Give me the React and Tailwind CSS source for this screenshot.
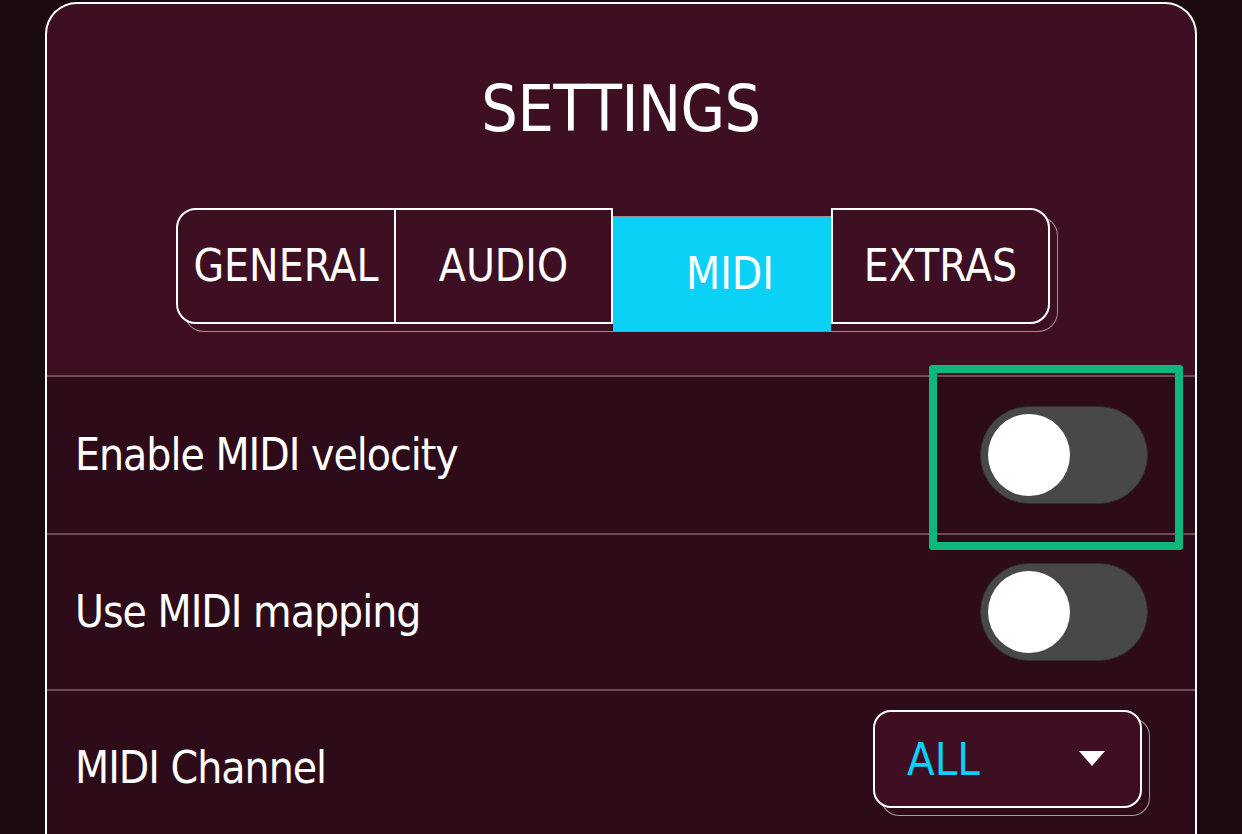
import React, { useState } from 'react';

const FONT = { fontFamily: '"DejaVu Sans Condensed", "Liberation Sans Narrow", "Liberation Sans", sans-serif' };

const TABS = ['GENERAL', 'AUDIO', 'MIDI', 'EXTRAS'];

function Toggle({ on, onChange }) {
  return (
    <button
      onClick={() => onChange(!on)}
      className="w-[168px] h-[98px] rounded-full bg-[#484848] border border-[#2f2f2f] flex items-center px-[7px]"
    >
      <span className={`block w-[82px] h-[82px] rounded-full bg-white ${on ? 'ml-auto' : ''}`} />
    </button>
  );
}

function Row({ label, children, first }) {
  return (
    <div className={`h-[156px] flex items-center justify-between pl-[28px] pr-[47px] bg-[#2e0b19] ${first ? '' : 'border-t-2 border-[#6d4b5b]'}`}>
      <span className="text-[44px] tracking-[-1px] text-white leading-none">{label}</span>
      {children}
    </div>
  );
}

export default function App() {
  const [tab, setTab] = useState('MIDI');
  const [velocity, setVelocity] = useState(false);
  const [mapping, setMapping] = useState(false);

  return (
    <div className="relative h-[834px] w-[1242px] overflow-hidden bg-[#1b0910]" style={FONT}>
      <div className="mt-[2px] mx-[45px] rounded-t-[32px] border-2 border-b-0 border-white bg-[#3e0f22] overflow-hidden">
        <div className="pt-[65px] pb-[51px] border-b-2 border-[#6d4b5b]">
          <h1 className="text-center text-white text-[64px] tracking-[-0.5px] leading-[80px]">SETTINGS</h1>
          <div className="flex justify-center pr-[16px] mt-[59px]">
            <div className="flex rounded-[20px] shadow-[8px_8px_0_-1px_#3e0f22,8px_8px_0_0_#9d8c94]">
              {TABS.map((t, i) => {
                const active = t === tab;
                const widths = ['w-[220px]', 'w-[217px]', 'w-[218px]', 'w-[219px]'];
                let cls;
                if (active) {
                  cls = 'bg-[#0bd1f7] translate-y-[8px] border-y border-[#9d8c94] pl-[16px]';
                } else if (i === 0) {
                  cls = 'bg-[#3e0f22] border-2 border-white rounded-l-[20px]';
                } else if (i === TABS.length - 1) {
                  cls = 'bg-[#3e0f22] border-2 border-white rounded-r-[20px]';
                } else {
                  cls = 'bg-[#3e0f22] border-y-2 border-r-2 border-white';
                }
                return (
                  <button
                    key={t}
                    onClick={() => setTab(t)}
                    className={`${widths[i]} h-[116px] flex items-center justify-center text-white text-[44px] leading-none ${cls}`}
                  >
                    {t}
                  </button>
                );
              })}
            </div>
          </div>
        </div>

        <Row label="Enable MIDI velocity" first>
          <Toggle on={velocity} onChange={setVelocity} />
        </Row>
        <Row label="Use MIDI mapping">
          <Toggle on={mapping} onChange={setMapping} />
        </Row>
        <Row label="MIDI Channel">
          <button className="mr-[6px] -mt-[18px] w-[269px] h-[98px] rounded-[18px] border-2 border-white bg-[#3e0f22] flex items-center justify-between pl-[32px] pr-[35px] shadow-[8px_8px_0_-1px_#2e0b19,8px_8px_0_0_#a59ba0]">
            <span className="text-[45px] leading-none text-[#0bd1f7]">ALL</span>
            <svg width="26" height="16" viewBox="0 0 26 16">
              <polygon points="0,0 26,0 13,15" fill="white" />
            </svg>
          </button>
        </Row>
      </div>

      <div className="absolute left-[929px] top-[365px] w-[254px] h-[185px] border-[8px] border-[#0cb87c] rounded-[3px]" />
    </div>
  );
}
